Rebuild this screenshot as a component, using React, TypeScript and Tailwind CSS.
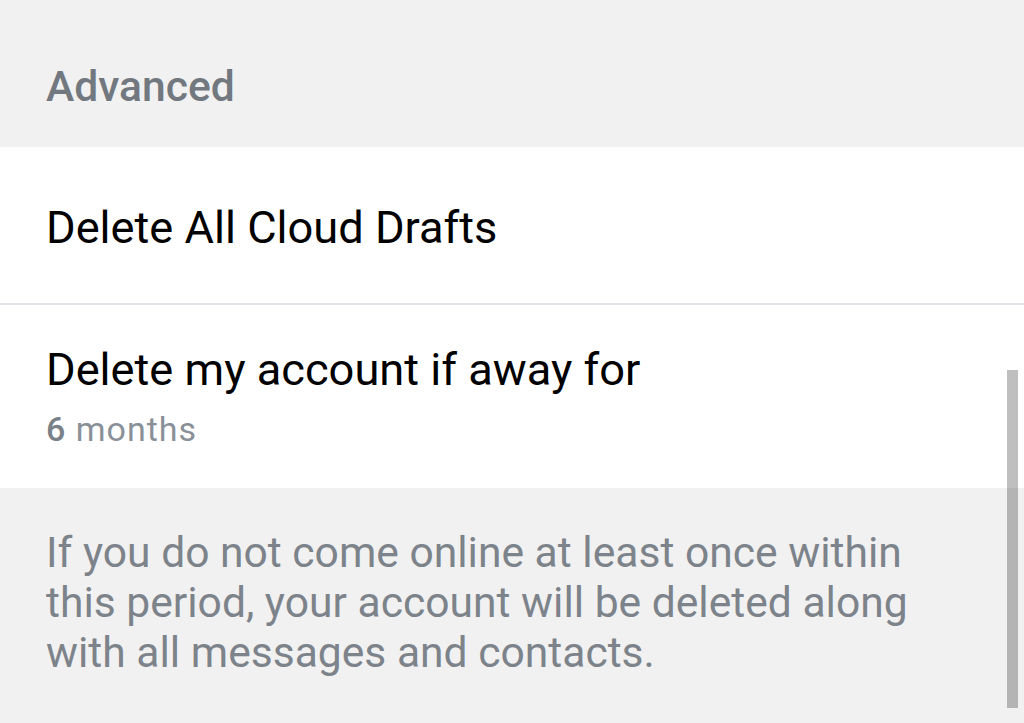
export default function App() {
  return (
    <div
      className="relative min-h-[723px] w-full overflow-hidden bg-[#f1f1f1]"
      style={{ fontFamily: "Roboto, 'Noto Sans', sans-serif" }}
    >
      {/* section header */}
      <div className="h-[147px] px-[46px] pt-[61px]">
        <h2 className="text-[42.6px] leading-[50px] font-medium text-[#72787f]">Advanced</h2>
      </div>

      {/* settings rows */}
      <div className="bg-white">
        <div className="h-[156px] px-[46px] pt-[55px]">
          <p className="text-[45.2px] leading-[52px] text-black">Delete All Cloud Drafts</p>
        </div>
        <div className="h-[2px] bg-[#e3e4e9]" />
        <div className="h-[183px] px-[46px] pt-[39px]">
          <p className="text-[45.2px] leading-[52px] text-black">Delete my account if away for</p>
          <p className="mt-[13px] text-[34px] leading-[40px] tracking-[1px] text-[#8a9098]">
            <span className="font-medium text-[#7a8088]">6</span> months
          </p>
        </div>
      </div>

      {/* footer hint */}
      <div className="px-[46px] pt-[39px]">
        <p className="max-w-[880px] text-[42.6px] leading-[50px] text-[#7d838a]">
          If you do not come online at least once within this period, your account will be deleted
          along with all messages and contacts.
        </p>
      </div>

      {/* scroll indicator */}
      <div className="absolute top-[370px] right-[6px] h-[338px] w-[11px] bg-black/25" />
    </div>
  );
}
